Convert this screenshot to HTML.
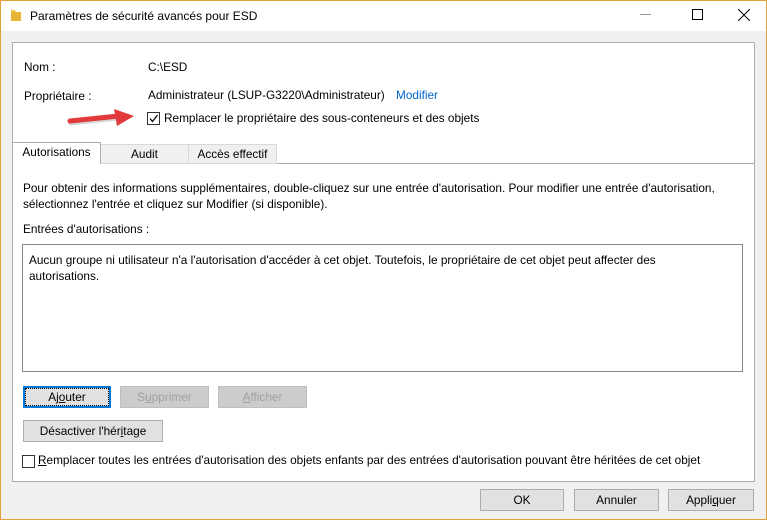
<!DOCTYPE html>
<html><head><meta charset="utf-8"><style>
*{box-sizing:border-box;margin:0;padding:0}
body{width:767px;height:520px;overflow:hidden;font-family:"Liberation Sans",sans-serif;font-size:11.8px;color:#000;position:relative;background:#f0f0f0}
.win{position:absolute;left:0;top:0;width:767px;height:520px;background:#f0f0f0}
.brd{position:absolute;left:0;top:0;width:767px;height:520px;border:1px solid #e2a13a;pointer-events:none}
.title{position:absolute;left:0;top:0;width:767px;height:31px;background:#fff}
.a{position:absolute;white-space:nowrap}
.panel{position:absolute;left:12px;top:42px;width:743px;height:440px;background:#fff;border:1px solid #adadad}
.btn{position:absolute;height:22px;background:#e1e1e1;border:1px solid #adadad;text-align:center;line-height:20px}
.dis{background:#cccccc;border-color:#bfbfbf;color:#a0a0a0}
.tab{position:absolute;top:144px;height:21px;border:1px solid #d9d9d9;background:#f0f0f0;text-align:center;line-height:19px}
.cb{position:absolute;width:13px;height:13px;border:1px solid #333;background:#fff}
</style></head><body>
<div class="win">
<div class="title"></div>
<svg class="a" style="left:10px;top:8px" width="12" height="14"><path d="M1 2h4l1 2h5v9H1z" fill="#f4c64c"/><path d="M1 4h10v9H1z" fill="#e8b434"/></svg>
<div class="a" style="left:30px;top:9px;font-size:12px">Paramètres de sécurité avancés pour ESD</div>
<div class="a" style="left:640px;top:14px;width:11px;height:1px;background:#999"></div>
<div class="a" style="left:692px;top:9px;width:11px;height:11px;border:1px solid #000"></div>
<svg class="a" style="left:738px;top:9px" width="12" height="12"><path d="M0 0L12 12M12 0L0 12" stroke="#000" stroke-width="1"/></svg>
<div class="panel"></div>
<div class="a" style="left:12px;top:163px;width:743px;height:1px;background:#adadad"></div>
<div class="a" style="left:24px;top:60px">Nom :</div>
<div class="a" style="left:148px;top:60px">C:\ESD</div>
<div class="a" style="left:24px;top:89px">Propriétaire :</div>
<div class="a" style="left:148px;top:88px">Administrateur (LSUP-G3220\Administrateur)</div>
<div class="a" style="left:396px;top:88px;color:#0066cc">Modifier</div>
<svg class="a" style="left:64px;top:106px" width="78" height="26"><path d="M7 17L55 12" stroke="#b0b0b0" stroke-width="5" stroke-linecap="round" opacity=".5"/><path d="M6 15L55 10" stroke="#e23a3a" stroke-width="5" stroke-linecap="round"/><path d="M50 3L70 10L53 20Z" fill="#e23a3a"/></svg>
<div class="cb" style="left:147px;top:112px"></div>
<svg class="a" style="left:148px;top:113px" width="11" height="11"><path d="M2 5.5L4.5 8.5L9.5 2" stroke="#000" stroke-width="1.2" fill="none"/></svg>
<div class="a" style="left:164px;top:111px">Remplacer le propriétaire des sous-conteneurs et des objets</div>
<div class="tab" style="left:100px;top:144px;height:20px;width:89px">Audit</div>
<div class="tab" style="left:188px;top:144px;height:20px;width:89px">Accès effectif</div>
<div class="tab" style="left:12px;top:142px;width:89px;height:22px;background:#fff;border-bottom:none;border-color:#adadad">Autorisations</div>
<div class="a" style="left:23px;top:180px;line-height:16px">Pour obtenir des informations supplémentaires, double-cliquez sur une entrée d'autorisation. Pour modifier une entrée d'autorisation,<br>sélectionnez l'entrée et cliquez sur Modifier (si disponible).</div>
<div class="a" style="left:23px;top:222px">Entrées d'autorisations :</div>
<div class="a" style="left:22px;top:244px;width:721px;height:128px;border:1px solid #828790;background:#fff"></div>
<div class="a" style="left:29px;top:252px;line-height:16px">Aucun groupe ni utilisateur n'a l'autorisation d'accéder à cet objet. Toutefois, le propriétaire de cet objet peut affecter des<br>autorisations.</div>
<div class="btn" style="left:23px;top:386px;width:88px;border:1px solid #0078d7;box-shadow:inset 0 0 0 1px #0078d7"><span style="outline:1px dotted #000;outline-offset:1px;display:inline-block;width:80px;line-height:14px">Aj<u>o</u>uter</span></div>
<div class="btn dis" style="left:120px;top:386px;width:89px">S<u>u</u>pprimer</div>
<div class="btn dis" style="left:218px;top:386px;width:89px"><u>A</u>fficher</div>
<div class="btn" style="left:23px;top:420px;width:140px">Désactiver l'hér<u>i</u>tage</div>
<div class="cb" style="left:22px;top:455px"></div>
<div class="a" style="left:38px;top:453px"><u>R</u>emplacer toutes les entrées d'autorisation des objets enfants par des entrées d'autorisation pouvant être héritées de cet objet</div>
<div class="btn" style="left:480px;top:489px;width:84px">OK</div>
<div class="btn" style="left:574px;top:489px;width:85px">Annuler</div>
<div class="btn" style="left:668px;top:489px;width:86px">Appli<u>q</u>uer</div>
<div class="brd"></div>
</div>
</body></html>
